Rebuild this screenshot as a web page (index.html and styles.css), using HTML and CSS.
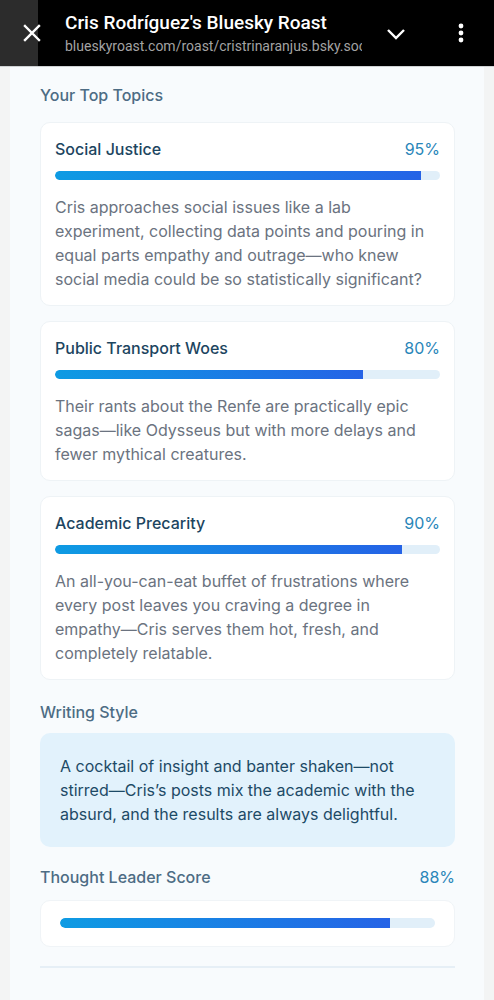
FILE: index.html
```html
<!DOCTYPE html>
<html lang="en">
<head>
    <meta charset="UTF-8">
    <meta name="viewport" content="width=device-width, initial-scale=1.0">
    <title>Cris Rodríguez's Bluesky Roast</title>
    <link rel="stylesheet" href="styles.css">
</head>
<body>

    <div class="topbar">
        <div class="close-btn">
            <svg width="18" height="18" viewBox="0 0 18 18"><path d="M2 2 L16 16 M16 2 L2 16" stroke="#fff" stroke-width="2.4" stroke-linecap="square"/></svg>
        </div>
        <div class="tab-info">
            <div class="tab-title">Cris Rodríguez's Bluesky Roast</div>
            <div class="tab-url">blueskyroast.com/roast/cristrinaranjus.bsky.social</div>
        </div>
        <div class="tab-action chevron">
            <svg width="20" height="12" viewBox="0 0 20 12"><path d="M2 2 L10 10 L18 2" fill="none" stroke="#fff" stroke-width="2.4"/></svg>
        </div>
        <div class="tab-action menu">
            <svg width="6" height="20" viewBox="0 0 6 20"><circle cx="3" cy="3" r="2.4" fill="#fff"/><circle cx="3" cy="10" r="2.4" fill="#fff"/><circle cx="3" cy="17" r="2.4" fill="#fff"/></svg>
        </div>
    </div>

    <div class="roast">
        <h3 class="section-title">Your Top Topics</h3>

        <div class="topic">
            <div class="topic-head">
                <span class="topic-name">Social Justice</span>
                <span class="percent">95%</span>
            </div>
            <div class="bar"><div class="bar-fill" style="width: 95%;"></div></div>
            <p class="topic-text">Cris approaches social issues like a lab experiment, collecting data points and pouring in equal parts empathy and outrage—who knew social media could be so statistically significant?</p>
        </div>

        <div class="topic">
            <div class="topic-head">
                <span class="topic-name">Public Transport Woes</span>
                <span class="percent">80%</span>
            </div>
            <div class="bar"><div class="bar-fill" style="width: 80%;"></div></div>
            <p class="topic-text">Their rants about the Renfe are practically epic sagas—like Odysseus but with more delays and fewer mythical creatures.</p>
        </div>

        <div class="topic">
            <div class="topic-head">
                <span class="topic-name">Academic Precarity</span>
                <span class="percent">90%</span>
            </div>
            <div class="bar"><div class="bar-fill" style="width: 90%;"></div></div>
            <p class="topic-text">An all-you-can-eat buffet of frustrations where every post leaves you craving a degree in empathy—Cris serves them hot, fresh, and completely relatable.</p>
        </div>

        <h3 class="section-title style-title">Writing Style</h3>
        <div class="style-box">
            A cocktail of insight and banter shaken—not stirred—Cris’s posts mix the academic with the absurd, and the results are always delightful.
        </div>

        <div class="score-head">
            <h3 class="section-title">Thought Leader Score</h3>
            <span class="percent">88%</span>
        </div>
        <div class="score-card">
            <div class="bar"><div class="bar-fill" style="width: 88%;"></div></div>
        </div>

        <hr class="divider">
    </div>

</body>
</html>
```

FILE: styles.css
```css
body {
    margin: 0;
    background-color: #f3f4f4;
    font-family: Inter, "Noto Sans", sans-serif;
    overflow: hidden;
}
.topbar {
    display: flex;
    align-items: center;
    height: 66px;
    background: #000;
    border-bottom: 1px solid #cfd2d4;
    font-family: Roboto, sans-serif;
}
.close-btn {
    width: 38px;
    height: 100%;
    background: #2c2c2c;
    display: flex;
    align-items: center;
    justify-content: flex-end;
}
.close-btn svg {
    margin-right: -3px;
}
.tab-info {
    width: 297px;
    margin-left: 27px;
    overflow: hidden;
    white-space: nowrap;
}
.tab-title {
    color: #fff;
    font-size: 19px;
    font-weight: 500;
    line-height: 26px;
}
.tab-url {
    color: #a3a3a3;
    font-size: 14px;
    line-height: 20px;
}
.tab-action {
    display: flex;
    align-items: center;
}
.chevron {
    margin-left: 24px;
    margin-top: 2px;
}
.menu {
    margin-left: 52px;
}
.roast {
    margin: 0 10px;
    padding: 16px 29px 40px 30px;
    background: #f8fbfd;
    min-height: 1000px;
}
.section-title {
    margin: 0;
    font-size: 16px;
    font-weight: 500;
    color: #4d6c84;
    line-height: 24px;
}
.topic {
    margin-top: 15px;
    padding: 14px 14px 14px 14px;
    background: #fff;
    border: 1px solid #eef3f6;
    border-radius: 10px;
}
.topic + .topic {
    margin-top: 15px;
}
.topic-head {
    display: flex;
    justify-content: space-between;
    line-height: 24px;
    font-size: 16px;
}
.topic-name {
    font-weight: 500;
    color: #1c4560;
}
.percent {
    color: #2a86b9;
    font-size: 16px;
    line-height: 24px;
}
.bar {
    margin-top: 10px;
    height: 9px;
    border-radius: 5px;
    background: #e1eff9;
    overflow: hidden;
}
.bar-fill {
    height: 100%;
    border-radius: 5px 0 0 5px;
    background: linear-gradient(90deg, #0e9be3, #2563e6);
}
.topic-text {
    margin: 15px 0 0;
    font-size: 16px;
    line-height: 24px;
    color: #6b7380;
}
.style-title {
    margin-top: 20px;
}
.style-box {
    margin-top: 9px;
    padding: 21px 20px;
    background: #e2f2fc;
    border-radius: 10px;
    color: #1d4a66;
    font-size: 16px;
    line-height: 24px;
}
.score-head {
    display: flex;
    justify-content: space-between;
    margin-top: 18px;
}
.score-card {
    margin-top: 11px;
    padding: 17px 19px 18px 19px;
    background: #fff;
    border: 1px solid #f0f4f7;
    border-radius: 10px;
}
.score-card .bar {
    margin-top: 0;
    height: 10px;
}
.divider {
    margin: 19px 0 0;
    border: none;
    border-top: 2px solid #e6eff6;
}
```
